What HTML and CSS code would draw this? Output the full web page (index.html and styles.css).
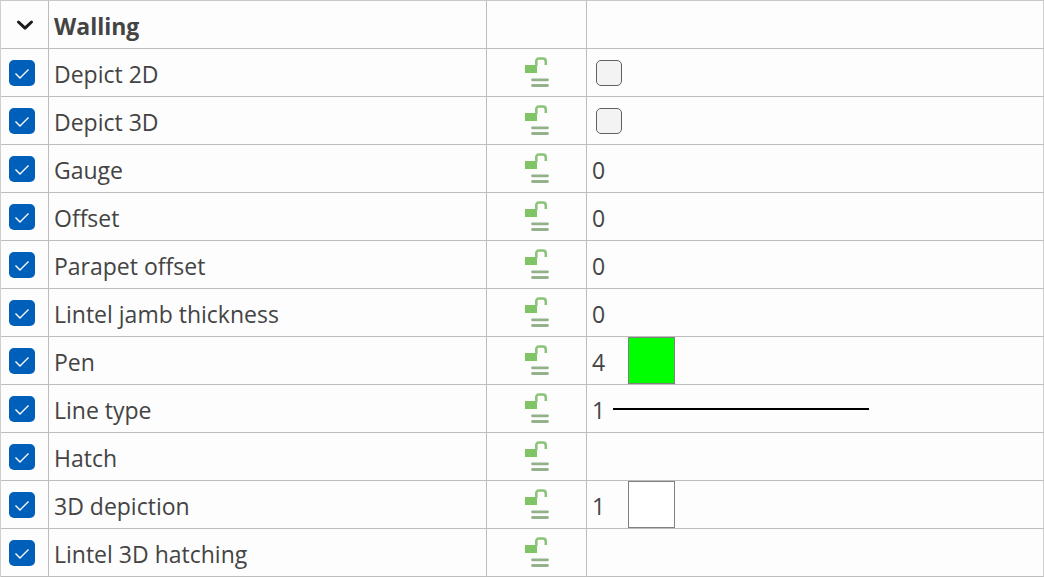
FILE: index.html
```html
<!DOCTYPE html>
<html lang="en">
<head>
    <meta charset="UTF-8">
    <meta name="viewport" content="width=device-width, initial-scale=1.0">
    <title>Walling</title>
    <link rel="stylesheet" href="styles.css">
</head>
<body>
    <svg class="symbols" aria-hidden="true">
        <symbol id="unlocked" viewBox="0 0 24 30">
            <rect x="0" y="8" width="12" height="8" fill="#7fc465"/>
            <path d="M11.300 9V4.500Q11.300 1.500 14 1.500H18Q20.800 1.500 20.800 4.500V8" fill="none" stroke="#8cc47a" stroke-width="2.600"/>
            <path d="M7.500 22.800H22.500M7.500 28.500H22.500" fill="none" stroke="#93b18a" stroke-width="2.800" stroke-linecap="round"/>
        </symbol>
    </svg>

    <table class="properties">
        <colgroup>
            <col class="col-check">
            <col class="col-name">
            <col class="col-lock">
            <col class="col-value">
        </colgroup>
        <thead>
            <tr>
                <th class="check">
                    <button class="toggle" type="button" aria-label="Collapse Walling" aria-expanded="true">
                        <svg class="chevron" viewBox="0 0 18 12"><path d="M2.500 3L9 9.200L15.500 3" fill="none" stroke="#1b1b1b" stroke-width="3" stroke-linecap="round" stroke-linejoin="round"/></svg>
                    </button>
                </th>
                <th class="name">Walling</th>
                <th></th>
                <th></th>
            </tr>
        </thead>
        <tbody>
            <tr>
                <td class="check"><input type="checkbox" id="depict2d" checked></td>
                <td class="name"><label for="depict2d">Depict 2D</label></td>
                <td class="lock"><svg class="lock-icon"><use href="#unlocked"/></svg></td>
                <td class="value"><input class="option" type="checkbox" aria-label="Depict 2D value"></td>
            </tr>
            <tr>
                <td class="check"><input type="checkbox" id="depict3d" checked></td>
                <td class="name"><label for="depict3d">Depict 3D</label></td>
                <td class="lock"><svg class="lock-icon"><use href="#unlocked"/></svg></td>
                <td class="value"><input class="option" type="checkbox" aria-label="Depict 3D value"></td>
            </tr>
            <tr>
                <td class="check"><input type="checkbox" id="gauge" checked></td>
                <td class="name"><label for="gauge">Gauge</label></td>
                <td class="lock"><svg class="lock-icon"><use href="#unlocked"/></svg></td>
                <td class="value"><span class="number">0</span></td>
            </tr>
            <tr>
                <td class="check"><input type="checkbox" id="offset" checked></td>
                <td class="name"><label for="offset">Offset</label></td>
                <td class="lock"><svg class="lock-icon"><use href="#unlocked"/></svg></td>
                <td class="value"><span class="number">0</span></td>
            </tr>
            <tr>
                <td class="check"><input type="checkbox" id="parapet" checked></td>
                <td class="name"><label for="parapet">Parapet offset</label></td>
                <td class="lock"><svg class="lock-icon"><use href="#unlocked"/></svg></td>
                <td class="value"><span class="number">0</span></td>
            </tr>
            <tr>
                <td class="check"><input type="checkbox" id="jamb" checked></td>
                <td class="name"><label for="jamb">Lintel jamb thickness</label></td>
                <td class="lock"><svg class="lock-icon"><use href="#unlocked"/></svg></td>
                <td class="value"><span class="number">0</span></td>
            </tr>
            <tr>
                <td class="check"><input type="checkbox" id="pen" checked></td>
                <td class="name"><label for="pen">Pen</label></td>
                <td class="lock"><svg class="lock-icon"><use href="#unlocked"/></svg></td>
                <td class="value"><div class="sample"><span class="number">4</span><span class="swatch green"></span></div></td>
            </tr>
            <tr>
                <td class="check"><input type="checkbox" id="linetype" checked></td>
                <td class="name"><label for="linetype">Line type</label></td>
                <td class="lock"><svg class="lock-icon"><use href="#unlocked"/></svg></td>
                <td class="value"><div class="sample"><span class="number">1</span><span class="line"></span></div></td>
            </tr>
            <tr>
                <td class="check"><input type="checkbox" id="hatch" checked></td>
                <td class="name"><label for="hatch">Hatch</label></td>
                <td class="lock"><svg class="lock-icon"><use href="#unlocked"/></svg></td>
                <td class="value"></td>
            </tr>
            <tr>
                <td class="check"><input type="checkbox" id="depiction" checked></td>
                <td class="name"><label for="depiction">3D depiction</label></td>
                <td class="lock"><svg class="lock-icon"><use href="#unlocked"/></svg></td>
                <td class="value"><div class="sample"><span class="number">1</span><span class="swatch"></span></div></td>
            </tr>
            <tr>
                <td class="check"><input type="checkbox" id="hatching" checked></td>
                <td class="name"><label for="hatching">Lintel 3D hatching</label></td>
                <td class="lock"><svg class="lock-icon"><use href="#unlocked"/></svg></td>
                <td class="value"></td>
            </tr>
        </tbody>
    </table>
</body>
</html>
```

FILE: styles.css
```css
* {
    box-sizing: border-box;
}

body {
    margin: 0;
    background-color: #fdfdfd;
    color: #444;
    font-family: "Open Sans", "Noto Sans", sans-serif;
    font-size: 23px;
    line-height: 32px;
}

.symbols {
    display: none;
}

.properties {
    width: 100%;
    table-layout: fixed;
    border-collapse: separate;
    border-spacing: 0;
    border-top: 1px solid #c8c8c8;
    border-left: 1px solid #d0d0d0;
}

.col-check {
    width: 48px;
}

.col-name {
    width: 42%;
}

.col-lock {
    width: 100px;
}

th,
td {
    height: 48px;
    padding: 0 5px;
    border-right: 1px solid #bdbdbd;
    border-bottom: 1px solid #bdbdbd;
    text-align: left;
    vertical-align: middle;
}

th:last-child,
td:last-child {
    border-right-color: #d0d0d0;
}

.check {
    padding: 0 8px;
}

.name {
    padding-top: 2px;
}

.lock {
    padding: 0 0 2px;
    text-align: center;
}

.toggle {
    display: flex;
    align-items: center;
    justify-content: center;
    width: 32px;
    height: 32px;
    padding: 0;
    border: none;
    background: none;
}

.chevron {
    width: 18px;
    height: 12px;
}

input {
    display: block;
    appearance: none;
    width: 26px;
    height: 26px;
    margin: 0;
    border: 1px solid #606060;
    border-radius: 5px;
    background-color: #f3f3f3;
}

input:checked {
    border: none;
    background: #005fb8 url("data:image/svg+xml,%3Csvg xmlns='http://www.w3.org/2000/svg' viewBox='0 0 26 26'%3E%3Cpath d='M6.500 13.500L11 18L19.500 9.500' fill='none' stroke='white' stroke-width='1.400'/%3E%3C/svg%3E");
}

.option {
    margin-left: 4px;
}

.lock-icon {
    display: block;
    width: 24px;
    height: 30px;
    margin: 0 auto;
}

.sample {
    display: flex;
    align-items: center;
}

.number {
    display: inline-block;
    min-width: 21px;
    padding-top: 2px;
}

.swatch {
    width: 47px;
    height: 47px;
    margin-left: 15px;
    border: 1px solid #808080;
    background-color: #fff;
}

.green {
    background-color: #0f0;
}

.line {
    width: 256px;
    height: 2px;
    background-color: #000;
}
```
